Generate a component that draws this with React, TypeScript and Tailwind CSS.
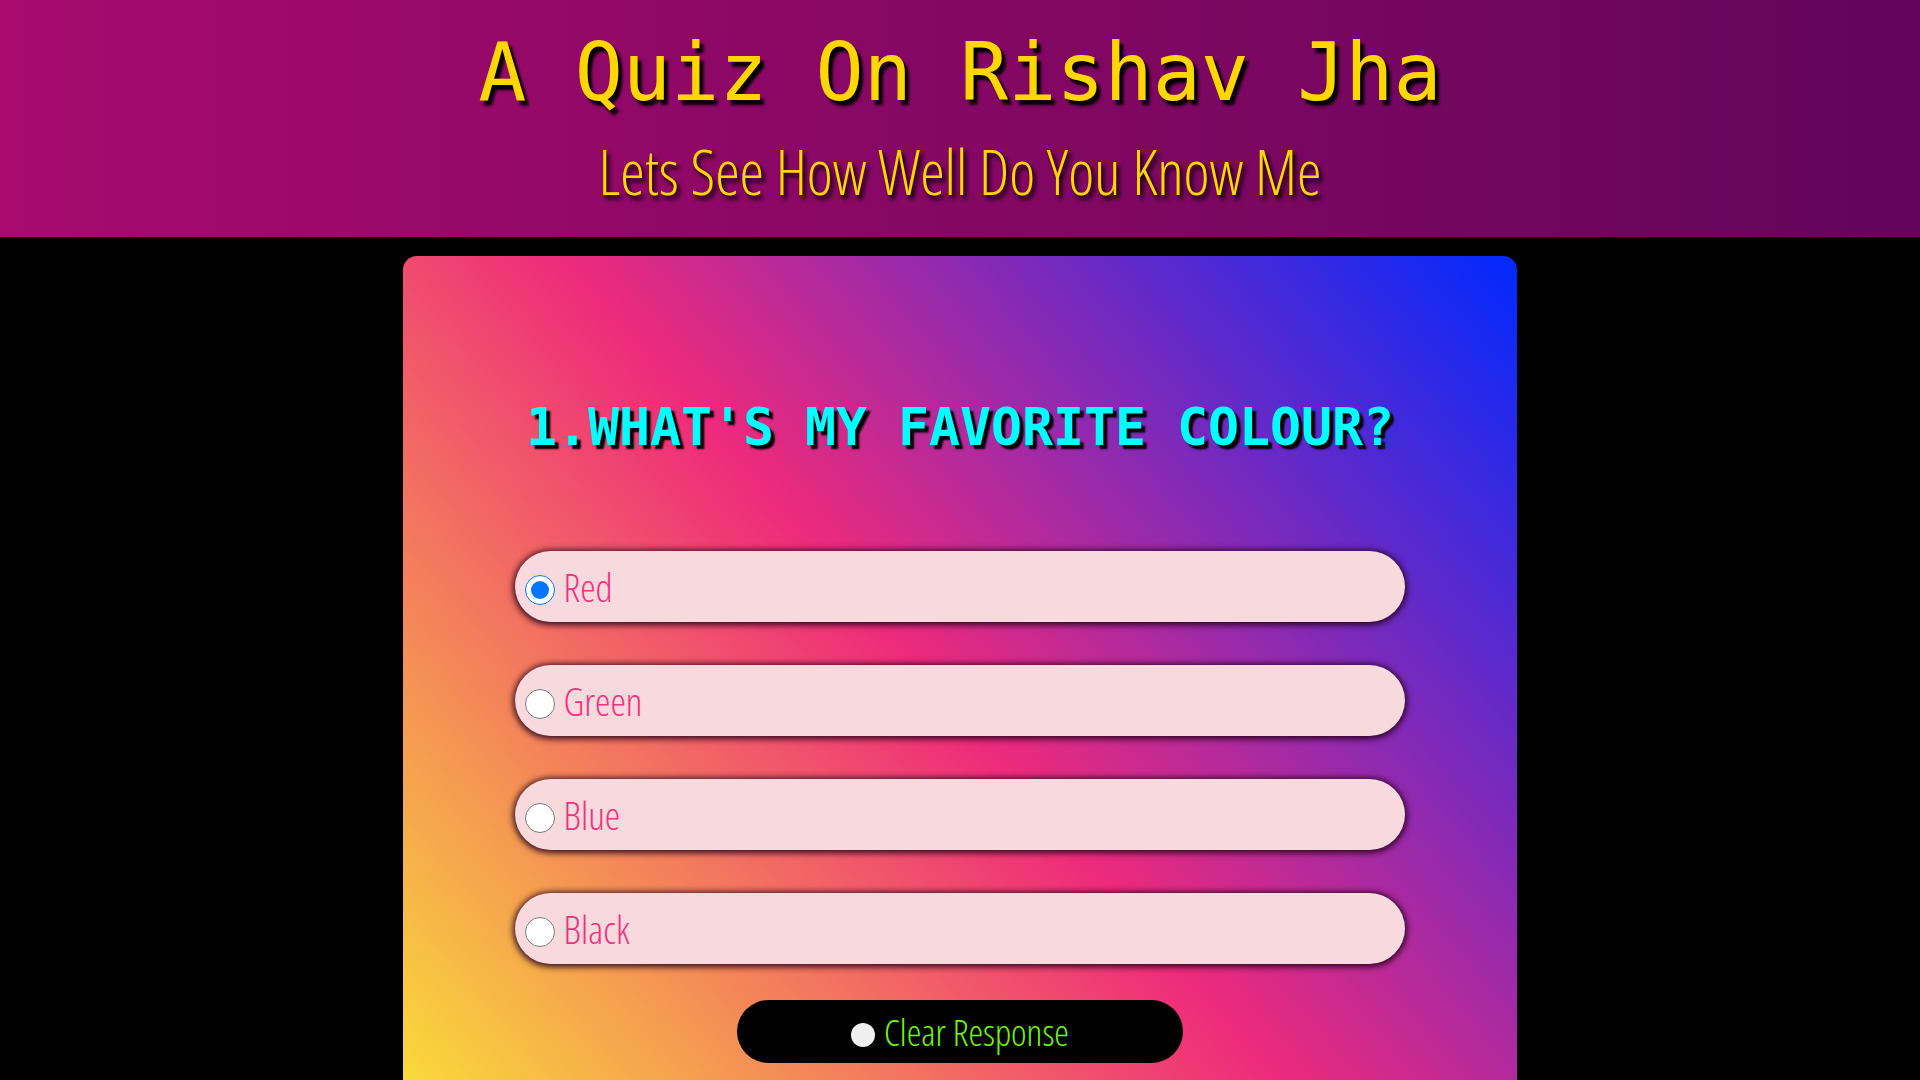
import React, { useState } from 'react';

const options = ['Red', 'Green', 'Blue', 'Black'];

export default function App() {
    const [answer, setAnswer] = useState<string | null>('Red');

    return (
        <div className="min-h-screen w-full bg-black">
            {/* Header */}
            <header className="h-[237px] w-full bg-[linear-gradient(to_right,#a80a6e,#62055a)] text-center text-[#ffd700]">
                <h1 className="pt-[24px] font-['DejaVu_Sans_Mono',monospace] text-[80px] leading-[98px] [text-shadow:4px_5px_3px_#000]">
                    A Quiz On Rishav Jha
                </h1>
                <p className="mt-[6px] font-['Open_Sans',sans-serif] font-light [font-stretch:75%] text-[62px] leading-[86px] [text-shadow:3px_4px_4px_#000]">
                    Lets See How Well Do You Know Me
                </p>
            </header>

            {/* Quiz card */}
            <main className="mx-auto mt-[19px] w-[58%] min-h-[1279px] rounded-[14px] bg-[linear-gradient(49deg,#f9d93a_18%,#ee2a7b_57%,#0029ff_100%)] pt-[142px]">
                <h2 className="text-center font-['DejaVu_Sans_Mono',monospace] text-[51.5px] font-bold leading-[59px] text-[#00ffff] [text-shadow:4px_4px_2px_#000]">
                    1.WHAT'S MY FAVORITE COLOUR?
                </h2>

                <div className="mt-[94px] flex flex-col items-center gap-[43px]">
                    {options.map((opt) => (
                        <label
                            key={opt}
                            className="flex h-[71px] w-[80%] cursor-pointer items-center rounded-full bg-[#f7d9de] pl-[10px] shadow-[0_1px_6px_2px_rgba(35,0,25,0.9)]"
                        >
                            <input
                                type="radio"
                                name="q1"
                                checked={answer === opt}
                                onChange={() => setAnswer(opt)}
                                className="m-0 mt-[6px] h-[30px] w-[30px] accent-[#0075ff]"
                            />
                            <span className="ml-[9px] font-['Open_Sans',sans-serif] font-light [font-stretch:75%] text-[39px] leading-none text-[#f0327c]">
                                {opt}
                            </span>
                        </label>
                    ))}
                </div>

                <div className="mt-[36px] flex justify-center">
                    <button
                        onClick={() => setAnswer(null)}
                        className="flex h-[63px] w-[40%] items-center justify-center rounded-full bg-black"
                    >
                        <span className="mt-[6px] h-[24px] w-[24px] rounded-full bg-[#efefef]" />
                        <span className="ml-[9px] font-['Open_Sans',sans-serif] font-light [font-stretch:75%] text-[37px] leading-none text-[#6ef90a]">
                            Clear Response
                        </span>
                    </button>
                </div>
            </main>
        </div>
    );
}
